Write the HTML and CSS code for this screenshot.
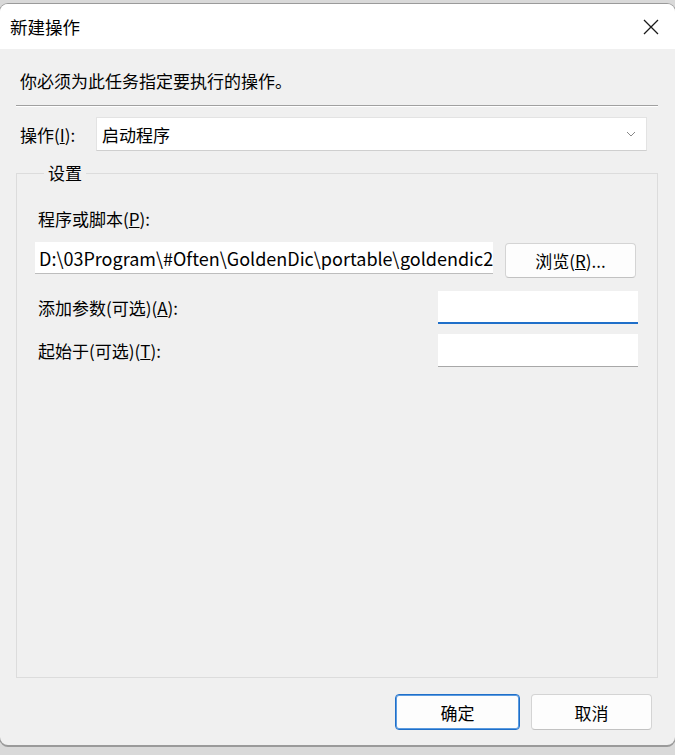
FILE: index.html
```html
<!DOCTYPE html>
<html lang="zh-CN">
<head>
  <meta charset="UTF-8" />
  <title>新建操作</title>
  <link rel="stylesheet" href="styles.css">
</head>
<body>
  <div class="window">
    <div class="titlebar">
      <span class="title">新建操作</span>
      <button class="close" aria-label="关闭">
        <svg width="16" height="16" viewBox="0 0 16 16">
          <path d="M1 1 L15 15 M15 1 L1 15" stroke="#1a1a1a" stroke-width="1.3" fill="none"/>
        </svg>
      </button>
    </div>

    <div class="content">
      <div class="hint">你必须为此任务指定要执行的操作。</div>
      <div class="separator"></div>

      <div class="action-row">
        <label>操作(<u>I</u>):</label>
        <div class="combo">
          <span>启动程序</span>
          <svg width="10" height="6" viewBox="0 0 10 6">
            <path d="M1 1 L5 5 L9 1" stroke="#888" stroke-width="1" fill="none"/>
          </svg>
        </div>
      </div>

      <fieldset class="settings">
        <legend>设置</legend>

        <label class="field-label">程序或脚本(<u>P</u>):</label>
        <div class="path-row">
          <input class="path" type="text" value="D:\03Program\#Often\GoldenDic\portable\goldendic2.exe">
          <button class="btn browse">浏览(<u>R</u>)...</button>
        </div>

        <div class="option-row first">
          <label class="field-label">添加参数(可选)(<u>A</u>):</label>
          <input class="box focused" type="text">
        </div>

        <div class="option-row">
          <label class="field-label">起始于(可选)(<u>T</u>):</label>
          <input class="box" type="text">
        </div>
      </fieldset>

      <div class="footer">
        <button class="btn ok">确定</button>
        <button class="btn cancel">取消</button>
      </div>
    </div>
  </div>
</body>
</html>
```

FILE: styles.css
```css
body {
  margin: 0;
  height: 755px;
  overflow: hidden;
  background: #d9d9d9;
  font-family: 'Segoe UI', 'Noto Sans CJK SC', sans-serif;
  font-size: 17px;
  color: #000;
}

.window {
  margin-top: 4px;
  height: 741px;
  display: flex;
  flex-direction: column;
  background: #f0f0f0;
  border-radius: 8px;
  box-shadow: 0 0 0 1px #9a9a9a, 0 2px 0 #9a9a9a;
  overflow: hidden;
}

.titlebar {
  height: 45px;
  flex: none;
  display: flex;
  align-items: center;
  justify-content: space-between;
  background: #fff;
  padding-left: 10px;
}

.title {
  font-size: 17.5px;
}

.close {
  width: 48px;
  height: 45px;
  border: none;
  background: transparent;
  display: flex;
  align-items: center;
  justify-content: center;
  padding: 0;
}

.content {
  flex: 1;
  display: flex;
  flex-direction: column;
  padding: 0 17px 0 16px;
}

.hint {
  margin-top: 20px;
  padding-left: 4px;
  line-height: 24px;
}

.separator {
  margin-top: 12px;
  height: 1px;
  background: #a0a0a0;
  border-bottom: 1px solid #fff;
}

.action-row {
  margin-top: 10px;
  display: flex;
  align-items: center;
}

.action-row label {
  flex: none;
  box-sizing: border-box;
  width: 80px;
  padding-left: 4px;
}

.combo {
  width: 551px;
  height: 34px;
  box-sizing: border-box;
  background: #fff;
  border: 1px solid #e3e3e3;
  border-bottom-color: #cfcfcf;
  display: flex;
  align-items: center;
  justify-content: space-between;
  padding: 0 10px 0 5px;
}

.settings {
  flex: 1;
  margin: 13px 0 0;
  padding: 0 19px 0 18px;
  border: 1px solid #dcdcdc;
  min-width: 0;
}

.settings legend {
  padding: 0 4px;
  margin-left: 9px;
  line-height: 18px;
}

.field-label {
  display: block;
  margin-left: 3px;
  line-height: 24px;
}

.settings > .field-label {
  margin-top: 25px;
}

.path-row {
  margin-top: 11px;
  display: flex;
  align-items: flex-start;
  gap: 12px;
}

input {
  font: inherit;
  box-sizing: border-box;
  border: none;
  outline: none;
  background: #fff;
  margin: 0;
}

.path {
  width: 458px;
  height: 32px;
  padding: 0 0 0 4px;
  font-size: 18px;
  border-bottom: 1px solid #bdbdbd;
  color: #000;
}

.btn {
  font: inherit;
  box-sizing: border-box;
  background: #fdfdfd;
  border: 1px solid #d4d4d4;
  border-bottom-color: #c2c2c2;
  border-radius: 4px;
  padding: 0;
  color: #000;
}

.browse {
  width: 131px;
  height: 35px;
  margin-top: 1px;
}

.option-row {
  display: flex;
  align-items: center;
  justify-content: space-between;
  margin-top: 10px;
}

.option-row.first {
  margin-top: 13px;
}

.box {
  width: 200px;
  height: 33px;
  border-bottom: 1px solid #a8a8a8;
}

.box.focused {
  border-bottom: 2px solid #1f6fc9;
}

.footer {
  flex: none;
  display: flex;
  justify-content: flex-end;
  gap: 11px;
  padding: 16px 6px 15px 0;
}

.ok {
  width: 125px;
  height: 36px;
  border: 1px solid #1f6fc9;
  border-radius: 4px;
  box-shadow: inset 0 0 0 1px #5b9be0;
}

.cancel {
  width: 121px;
  height: 36px;
}
```
